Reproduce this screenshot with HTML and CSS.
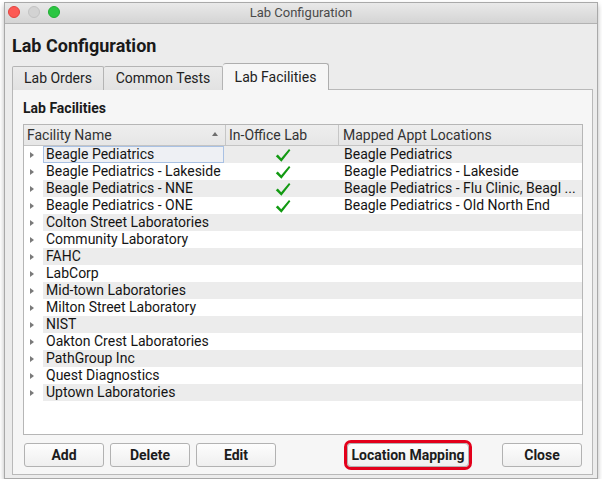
FILE: index.html
```html
<!DOCTYPE html>
<html>
<head>
<meta charset="utf-8">
<link rel="stylesheet" href="styles.css">
</head>
<body>
<div class="window">
  <div class="titlebar">
    <div class="lights">
      <span class="light red"></span>
      <span class="light grey"></span>
      <span class="light green"></span>
    </div>
    <div class="title">Lab Configuration</div>
  </div>
  <div class="content">
    <h1 class="heading">Lab Configuration</h1>
    <div class="tabs">
      <div class="tab t1">Lab Orders</div>
      <div class="tab t2">Common Tests</div>
      <div class="tab t3 active">Lab Facilities</div>
    </div>
    <div class="panel">
      <h2 class="subheading">Lab Facilities</h2>
      <div class="table">
        <div class="thead">
          <div class="th th-name"><span>Facility Name</span><span class="sort"></span></div>
          <div class="th th-lab">In-Office Lab</div>
          <div class="th th-map">Mapped Appt Locations</div>
        </div>
        <div class="tbody">
          <div class="row striped">
            <div class="c-tri"><span class="tri"></span></div>
            <div class="c-name"><span class="focus">Beagle Pediatrics</span></div>
            <div class="c-lab"><svg class="check" viewBox="0 0 16 15" width="16" height="15"><path d="M0.8 8.2 L2.8 6.6 L6.2 10.2 L14 1 L15.4 2.2 L6.4 13.8 Z" fill="#129a12"/></svg></div>
            <div class="c-map">Beagle Pediatrics</div>
          </div>
          <div class="row">
            <div class="c-tri"><span class="tri"></span></div>
            <div class="c-name">Beagle Pediatrics - Lakeside</div>
            <div class="c-lab"><svg class="check" viewBox="0 0 16 15" width="16" height="15"><path d="M0.8 8.2 L2.8 6.6 L6.2 10.2 L14 1 L15.4 2.2 L6.4 13.8 Z" fill="#129a12"/></svg></div>
            <div class="c-map">Beagle Pediatrics - Lakeside</div>
          </div>
          <div class="row striped">
            <div class="c-tri"><span class="tri"></span></div>
            <div class="c-name">Beagle Pediatrics - NNE</div>
            <div class="c-lab"><svg class="check" viewBox="0 0 16 15" width="16" height="15"><path d="M0.8 8.2 L2.8 6.6 L6.2 10.2 L14 1 L15.4 2.2 L6.4 13.8 Z" fill="#129a12"/></svg></div>
            <div class="c-map">Beagle Pediatrics - Flu Clinic, Beagl ...</div>
          </div>
          <div class="row">
            <div class="c-tri"><span class="tri"></span></div>
            <div class="c-name">Beagle Pediatrics - ONE</div>
            <div class="c-lab"><svg class="check" viewBox="0 0 16 15" width="16" height="15"><path d="M0.8 8.2 L2.8 6.6 L6.2 10.2 L14 1 L15.4 2.2 L6.4 13.8 Z" fill="#129a12"/></svg></div>
            <div class="c-map">Beagle Pediatrics - Old North End</div>
          </div>
          <div class="row striped">
            <div class="c-tri"><span class="tri"></span></div>
            <div class="c-name">Colton Street Laboratories</div>
            <div class="c-lab"></div>
            <div class="c-map"></div>
          </div>
          <div class="row">
            <div class="c-tri"><span class="tri"></span></div>
            <div class="c-name">Community Laboratory</div>
            <div class="c-lab"></div>
            <div class="c-map"></div>
          </div>
          <div class="row striped">
            <div class="c-tri"><span class="tri"></span></div>
            <div class="c-name">FAHC</div>
            <div class="c-lab"></div>
            <div class="c-map"></div>
          </div>
          <div class="row">
            <div class="c-tri"><span class="tri"></span></div>
            <div class="c-name">LabCorp</div>
            <div class="c-lab"></div>
            <div class="c-map"></div>
          </div>
          <div class="row striped">
            <div class="c-tri"><span class="tri"></span></div>
            <div class="c-name">Mid-town Laboratories</div>
            <div class="c-lab"></div>
            <div class="c-map"></div>
          </div>
          <div class="row">
            <div class="c-tri"><span class="tri"></span></div>
            <div class="c-name">Milton Street Laboratory</div>
            <div class="c-lab"></div>
            <div class="c-map"></div>
          </div>
          <div class="row striped">
            <div class="c-tri"><span class="tri"></span></div>
            <div class="c-name">NIST</div>
            <div class="c-lab"></div>
            <div class="c-map"></div>
          </div>
          <div class="row">
            <div class="c-tri"><span class="tri"></span></div>
            <div class="c-name">Oakton Crest Laboratories</div>
            <div class="c-lab"></div>
            <div class="c-map"></div>
          </div>
          <div class="row striped">
            <div class="c-tri"><span class="tri"></span></div>
            <div class="c-name">PathGroup Inc</div>
            <div class="c-lab"></div>
            <div class="c-map"></div>
          </div>
          <div class="row">
            <div class="c-tri"><span class="tri"></span></div>
            <div class="c-name">Quest Diagnostics</div>
            <div class="c-lab"></div>
            <div class="c-map"></div>
          </div>
          <div class="row striped">
            <div class="c-tri"><span class="tri"></span></div>
            <div class="c-name">Uptown Laboratories</div>
            <div class="c-lab"></div>
            <div class="c-map"></div>
          </div>
        </div>
      </div>
      <div class="buttons">
        <button class="btn">Add</button>
        <button class="btn">Delete</button>
        <button class="btn">Edit</button>
        <button class="btn btn-wide highlighted">Location Mapping</button>
        <button class="btn btn-close">Close</button>
      </div>
    </div>
  </div>
</div>
</body>
</html>
```

FILE: styles.css
```css
* { box-sizing: border-box; }
html, body {
  margin: 0;
  padding: 0;
  background: #ffffff;
  font-family: Roboto, "Liberation Sans", sans-serif;
  color: #1e1e1e;
}
.window {
  margin: 2px 0 0 4px;
  width: 594px;
  height: 477px;
  border: 1px solid #a9a9a9;
  background: #ececec;
  box-shadow: 0 3px 5px rgba(0,0,0,0.28);
  display: flex;
  flex-direction: column;
}
.titlebar {
  height: 21px;
  flex: none;
  position: relative;
  background: linear-gradient(#e9e9e9, #d4d4d4);
  border-bottom: 1px solid #b2b2b2;
  display: flex;
  align-items: center;
  justify-content: center;
}
.lights {
  position: absolute;
  left: 3px;
  top: 3px;
  display: flex;
  gap: 8px;
}
.light {
  width: 12px;
  height: 12px;
  border-radius: 50%;
  display: block;
}
.light.red { background: #fc5a55; border: 1px solid #e1443f; }
.light.grey { background: #d3d3d3; border: 1px solid #c3c3c3; }
.light.green { background: #2bc642; border: 1px solid #1fae32; }
.title {
  font-size: 13px;
  color: #4a4a4a;
  line-height: 20px;
}
.content {
  flex: 1;
  display: flex;
  flex-direction: column;
  padding: 0 4px 3px 7px;
}
.heading {
  margin: 12px 0 0 0;
  font-size: 18px;
  font-weight: bold;
  line-height: 20px;
  color: #1a1a1a;
}
.tabs {
  margin-top: 8px;
  height: 26px;
  display: flex;
  align-items: flex-end;
  position: relative;
  z-index: 1;
  margin-bottom: -1px;
}
.tab {
  height: 24px;
  border: 1px solid #b4b4b4;
  border-bottom: none;
  background: linear-gradient(#ebebeb, #e2e2e2);
  font-size: 14px;
  line-height: 23px;
  text-align: center;
  color: #222;
  border-radius: 2px 2px 0 0;
}
.t1 { width: 92px; }
.t2 { width: 119px; border-left: none; }
.t3 { width: 106px; }
.tab.active {
  height: 27px;
  line-height: 26px;
  background: #f6f6f6;
  border-color: #aeaeae;
  border-radius: 3px 3px 0 0;
  border-left: none;
}
.panel {
  flex: 1;
  border: 1px solid #b9b9b9;
  background: #f6f6f6;
  padding: 9px 9px 5px 10px;
  display: flex;
  flex-direction: column;
}
.subheading {
  margin: 0 0 7px 0;
  font-size: 14px;
  font-weight: bold;
  line-height: 18px;
  color: #1a1a1a;
}
.table {
  height: 311px;
  border: 1px solid #b6b6b6;
  background: #ffffff;
  display: flex;
  flex-direction: column;
}
.thead {
  height: 21px;
  display: grid;
  grid-template-columns: 202px 113px 1fr;
  background: linear-gradient(#eeeeee, #e6e6e6);
  border-bottom: 1px solid #c4c4c4;
}
.th {
  font-size: 14px;
  line-height: 20px;
  color: #333;
  border-right: 1px solid #c6c6c6;
  white-space: nowrap;
  overflow: hidden;
}
.th-name {
  padding-left: 3px;
  display: flex;
  justify-content: space-between;
  align-items: center;
  padding-right: 7px;
}
.sort {
  width: 0;
  height: 0;
  border-left: 3.5px solid transparent;
  border-right: 3.5px solid transparent;
  border-bottom: 4px solid #6e6e6e;
  margin-top: -2px;
}
.th-lab { padding-left: 3px; }
.th-map { padding-left: 4px; border-right: none; }
.row {
  height: 17px;
  display: grid;
  grid-template-columns: 19px 183px 113px 1fr;
  font-size: 14px;
  line-height: 17px;
  color: #141414;
}
.row.striped .c-name,
.row.striped .c-lab,
.row.striped .c-map {
  background: #ececec;
}
.c-tri {
  display: flex;
  align-items: center;
  justify-content: center;
  padding-right: 3px;
}
.tri {
  width: 0;
  height: 0;
  border-top: 3.5px solid transparent;
  border-bottom: 3.5px solid transparent;
  border-left: 4px solid #7a7a7a;
}
.c-name {
  padding-left: 3px;
  white-space: nowrap;
  overflow: hidden;
  position: relative;
}
.focus {
  display: block;
  margin-left: -3px;
  padding-left: 2px;
  width: 181px;
  height: 17px;
  line-height: 15px;
  border: 1px solid #a9c1e3;
  background: #eef0f4;
}
.c-lab {
  display: flex;
  justify-content: center;
  align-items: center;
  padding-left: 1px;
}
.check { display: block; margin-top: 2px; }
.c-map {
  padding-left: 5px;
  white-space: nowrap;
  overflow: hidden;
}
.buttons {
  margin-top: 8px;
  display: flex;
  gap: 6px;
  padding-left: 1px;
}
.btn {
  width: 80px;
  height: 24px;
  border: 1px solid #b2b2b2;
  border-radius: 3px;
  background: linear-gradient(#fdfdfd, #efefef);
  font-family: Roboto, "Liberation Sans", sans-serif;
  font-size: 14px;
  font-weight: bold;
  color: #1c1c1c;
  padding: 0;
}
.btn-wide {
  width: 122px;
  margin-left: 65px;
}
.highlighted {
  outline: 3px solid #e3001b;
  border-radius: 4px;
}
.btn-close {
  width: 80px;
  margin-left: 27px;
}
```
